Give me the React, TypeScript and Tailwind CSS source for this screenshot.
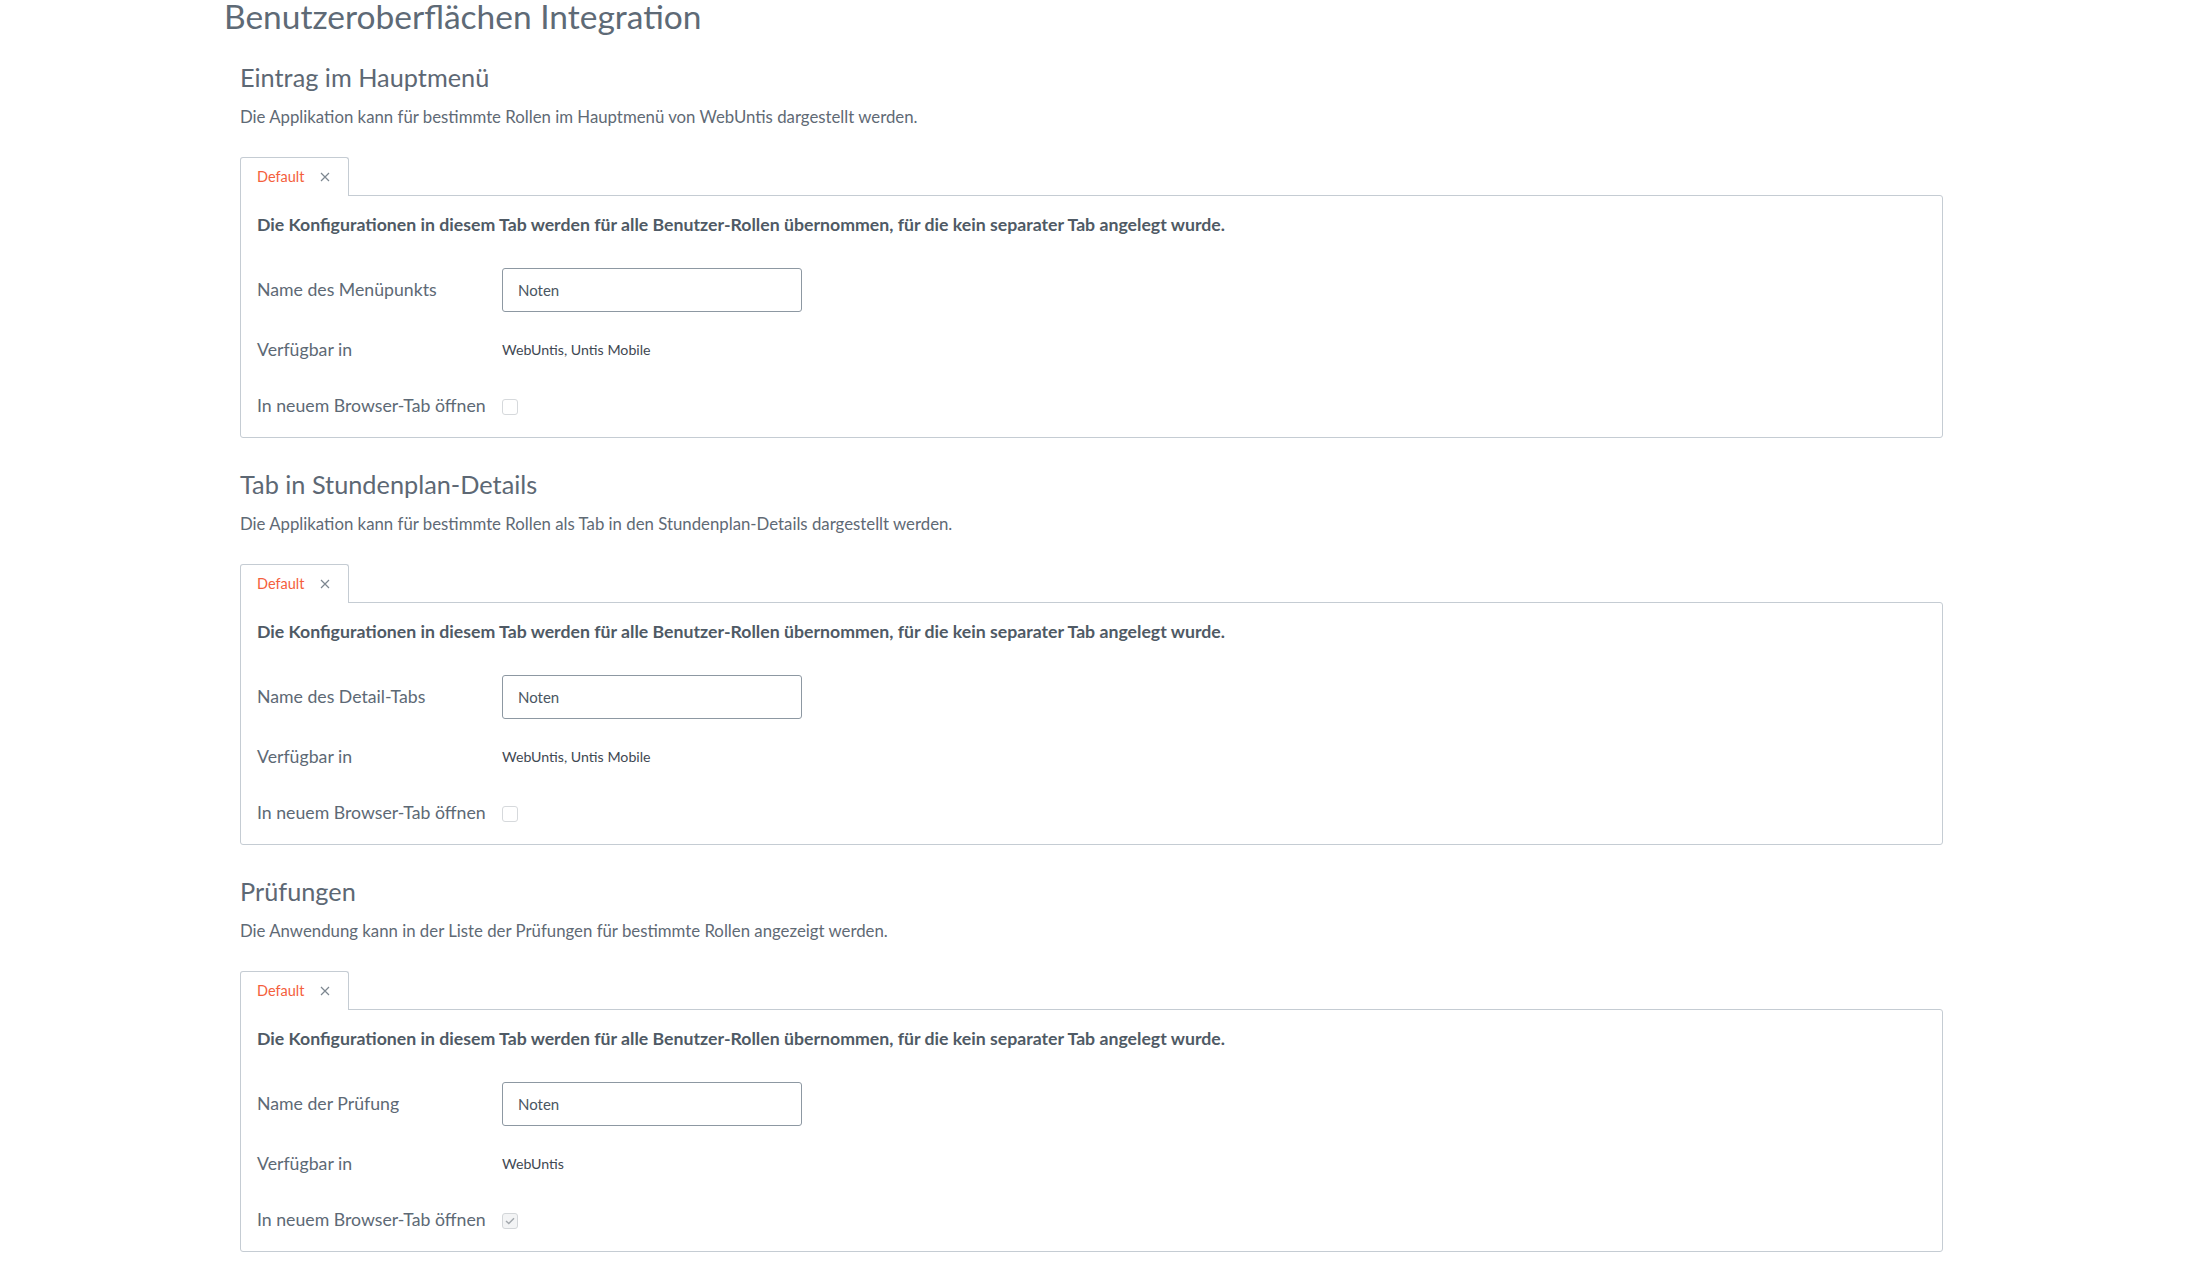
import React from "react";

interface SectionProps {
  title: string;
  description: string;
  nameLabel: string;
  available: string;
  newTab: boolean;
}

const CloseIcon = () => (
  <svg width="10" height="10" viewBox="0 0 10 10" className="ml-[16px]">
    <path d="M1 1 L9 9 M9 1 L1 9" stroke="#7d8790" strokeWidth="1.2" fill="none" />
  </svg>
);

const Checkbox = ({ checked }: { checked: boolean }) => (
  <div
    className={`flex h-[16px] w-[16px] items-center justify-center rounded-[3px] border ${
      checked ? "border-[#d3d6d9] bg-[#f3f4f5]" : "border-[#d6d9dc] bg-white"
    }`}
  >
    {checked && (
      <svg width="10" height="8" viewBox="0 0 10 8">
        <path d="M1 4 L3.8 6.6 L9 1.2" stroke="#a3a8ad" strokeWidth="1.4" fill="none" />
      </svg>
    )}
  </div>
);

const IntegrationSection: React.FC<SectionProps> = ({ title, description, nameLabel, available, newTab }) => {
  return (
    <section className="ml-[16px] w-[1703px]">
      {/* heading */}
      <h2 className="text-[25.3px] leading-[32px] text-[#5d6874]">{title}</h2>
      <p className="mt-[12px] text-[16.8px] leading-[24px] text-[#5f6a75]">{description}</p>

      {/* tab */}
      <div className="mt-[28px] flex">
        <div className="relative z-10 -mb-px flex h-[39px] items-center rounded-t-[3px] border border-b-0 border-[#c5ccd3] bg-white pl-[16px] pr-[18px]">
          <span className="text-[14.5px] text-[#f4603c]">Default</span>
          <CloseIcon />
        </div>
      </div>

      {/* panel */}
      <div className="rounded-b-[3px] rounded-tr-[3px] border border-[#c5ccd3] px-[16px] pb-[19px] pt-[17px]">
        <p className="text-[17.7px] font-bold leading-[24px] text-[#4f5a65]">
          Die Konfigurationen in diesem Tab werden für alle Benutzer-Rollen übernommen, für die kein separater Tab angelegt wurde.
        </p>

        <div className="mt-[31px] flex items-center">
          <div className="w-[245px] text-[17.7px] text-[#5d6975]">{nameLabel}</div>
          <div className="flex h-[44px] w-[300px] items-center rounded-[3px] border border-[#8d98a2] px-[15px] text-[15px] text-[#4a5662]">
            Noten
          </div>
        </div>

        <div className="mt-[26px] flex h-[24px] items-center">
          <div className="w-[245px] text-[17.7px] text-[#5d6975]">Verfügbar in</div>
          <div className="text-[14.2px] text-[#3f4852]">{available}</div>
        </div>

        <div className="mt-[32px] flex h-[24px] items-center">
          <div className="w-[245px] text-[17.7px] text-[#5d6975]">In neuem Browser-Tab öffnen</div>
          <div className="pt-[2px]">
            <Checkbox checked={newTab} />
          </div>
        </div>
      </div>
    </section>
  );
};

const App: React.FC = () => {
  return (
    <div className="min-h-[1280px] w-full bg-white pl-[224px] font-['Lato','Liberation_Sans',sans-serif]">
      <h1 className="text-[33.5px] leading-[32px] text-[#5e6a76]">Benutzeroberflächen Integration</h1>

      <div className="mt-[29px] flex flex-col gap-[30px]">
        <IntegrationSection
          title="Eintrag im Hauptmenü"
          description="Die Applikation kann für bestimmte Rollen im Hauptmenü von WebUntis dargestellt werden."
          nameLabel="Name des Menüpunkts"
          available="WebUntis, Untis Mobile"
          newTab={false}
        />
        <IntegrationSection
          title="Tab in Stundenplan-Details"
          description="Die Applikation kann für bestimmte Rollen als Tab in den Stundenplan-Details dargestellt werden."
          nameLabel="Name des Detail-Tabs"
          available="WebUntis, Untis Mobile"
          newTab={false}
        />
        <IntegrationSection
          title="Prüfungen"
          description="Die Anwendung kann in der Liste der Prüfungen für bestimmte Rollen angezeigt werden."
          nameLabel="Name der Prüfung"
          available="WebUntis"
          newTab={true}
        />
      </div>
    </div>
  );
};

export default App;
